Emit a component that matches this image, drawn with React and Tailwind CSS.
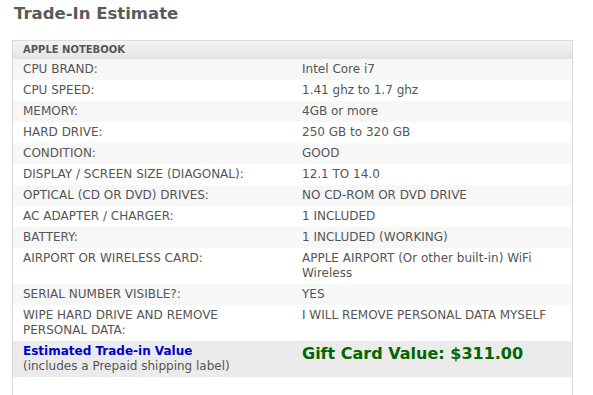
import React from 'react';

const rows = [
  ['CPU BRAND:', 'Intel Core i7'],
  ['CPU SPEED:', '1.41 ghz to 1.7 ghz'],
  ['MEMORY:', '4GB or more'],
  ['HARD DRIVE:', '250 GB to 320 GB'],
  ['CONDITION:', 'GOOD'],
  ['DISPLAY / SCREEN SIZE (DIAGONAL):', '12.1 TO 14.0'],
  ['OPTICAL (CD OR DVD) DRIVES:', 'NO CD-ROM OR DVD DRIVE'],
  ['AC ADAPTER / CHARGER:', '1 INCLUDED'],
  ['BATTERY:', '1 INCLUDED (WORKING)'],
  ['AIRPORT OR WIRELESS CARD:', ['APPLE AIRPORT (Or other built-in) WiFi', 'Wireless']],
  ['SERIAL NUMBER VISIBLE?:', 'YES'],
  [['WIPE HARD DRIVE AND REMOVE', 'PERSONAL DATA:'], 'I WILL REMOVE PERSONAL DATA MYSELF'],
];

function Lines({ text }) {
  if (!Array.isArray(text)) return text;
  return text.map((t, i) => (
    <React.Fragment key={i}>
      {i > 0 && <br />}
      {t}
    </React.Fragment>
  ));
}

export default function App() {
  return (
    <div className="w-[593px] h-[395px] overflow-hidden bg-white font-['DejaVu_Sans',Verdana,sans-serif] text-[#555]">
      <h1 className="pl-[14px] pt-[3px] h-[40px] text-[16.5px] leading-[22px] font-bold text-[#5a5a5a]">
        Trade-In Estimate
      </h1>
      <div className="ml-[12px] w-[561px] h-[355px] border-x border-t border-[#dcdcdc]">
        <div className="h-[18px] pl-[10px] bg-gradient-to-b from-[#f4f4f4] to-[#e4e4e4] text-[10px] leading-[18px] font-bold text-[#555]">
          APPLE NOTEBOOK
        </div>
        {rows.map(([label, value], i) => (
          <div
            key={i}
            className={`flex text-[12px] leading-[15px] py-[3px] ${i % 2 === 0 ? 'bg-[#f7f7f7]' : 'bg-white'}`}
          >
            <div className="w-[279px] pl-[10px] shrink-0">
              <Lines text={label} />
            </div>
            <div className="pl-[10px]">
              <Lines text={value} />
            </div>
          </div>
        ))}
        <div className="flex bg-[#ebebeb] py-[3px] text-[12px] leading-[15px]">
          <div className="w-[279px] pl-[10px] shrink-0">
            <div className="font-bold text-[#0000cc]">Estimated Trade-in Value</div>
            <div className="text-[#555]">(includes a Prepaid shipping label)</div>
          </div>
          <div className="pl-[10px] text-[16px] leading-[20px] font-bold text-[#006600]">
            Gift Card Value: $311.00
          </div>
        </div>
      </div>
    </div>
  );
}
